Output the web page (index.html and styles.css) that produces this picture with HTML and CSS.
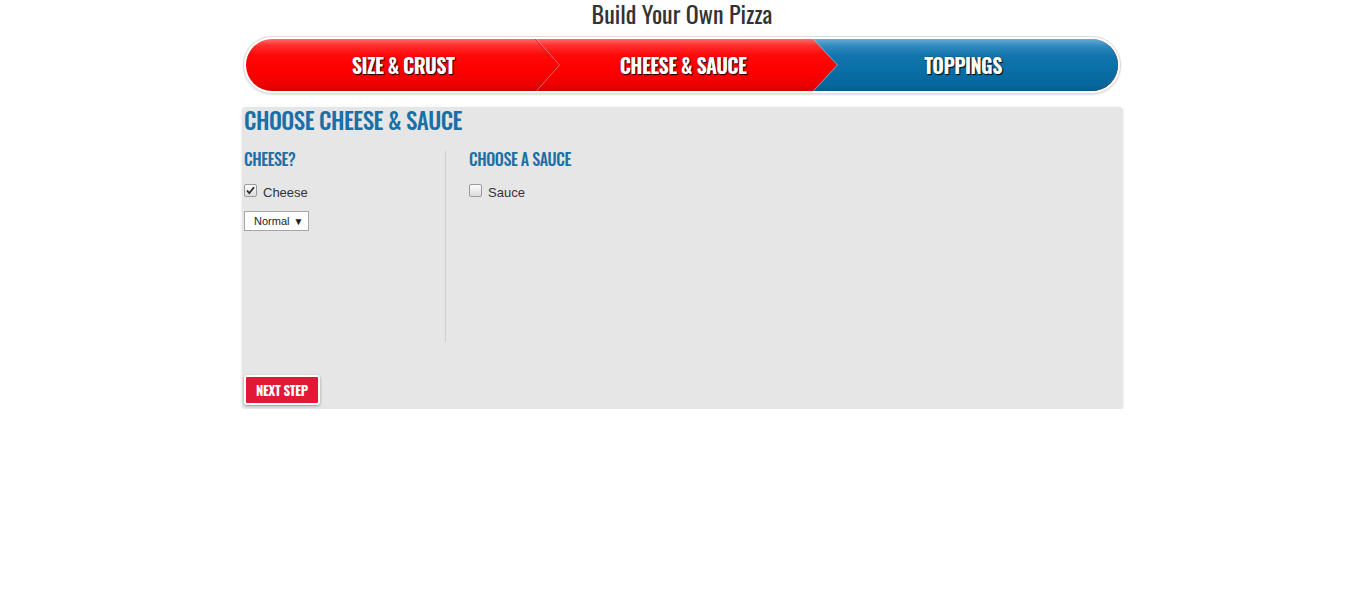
FILE: index.html
```html
<!DOCTYPE html>
<html>
<head>
<meta charset="utf-8">
<title>Build Your Own Pizza</title>
<link rel="stylesheet" href="styles.css">
</head>
<body>
<div class="page">
  <h1 class="title">Build Your Own Pizza</h1>
  <div class="steps">
    <div class="steps-inner">
      <div class="step step-1">SIZE &amp; CRUST
        <svg class="chev" width="26" height="52" viewBox="0 0 26 52"><polyline points="0,0 23,26 0,52" fill="none" stroke="rgba(150,40,40,0.55)" stroke-width="1"/><polyline points="1.5,0 24.5,26 1.5,52" fill="none" stroke="rgba(255,200,200,0.45)" stroke-width="1"/></svg>
      </div>
      <div class="step step-2">CHEESE &amp; SAUCE</div>
      <div class="step step-3">TOPPINGS
        <svg class="edge" width="26" height="52" viewBox="0 0 26 52"><polyline points="0,0 24,26 0,52" fill="none" stroke="rgba(190,190,200,0.8)" stroke-width="1.2"/></svg>
      </div>
    </div>
  </div>
  <div class="panel">
    <h2 class="panel-title">CHOOSE CHEESE &amp; SAUCE</h2>
    <div class="cols">
      <div class="col col-left">
        <h3 class="col-title">CHEESE?</h3>
        <label class="check-row"><span class="box"><svg width="11" height="11" viewBox="0 0 11 11"><path d="M2 5.5 L4.3 8.2 L9 2.2" fill="none" stroke="#2b2b2b" stroke-width="1.8"/></svg></span><span class="lbl">Cheese</span></label>
        <div class="select">Normal <span class="caret">▼</span></div>
      </div>
      <div class="col col-right">
        <h3 class="col-title">CHOOSE A SAUCE</h3>
        <label class="check-row"><span class="box"></span><span class="lbl">Sauce</span></label>
      </div>
    </div>
    <button class="next">NEXT STEP</button>
  </div>
</div>
</body>
</html>
```

FILE: styles.css
```css
* { box-sizing: border-box; }
body {
  margin: 0;
  background: #fff;
  font-family: "Liberation Sans", Arial, sans-serif;
}
.page {
  width: 882px;
  margin: 0 auto;
}
.title {
  margin: 0;
  font-family: "Oswald", "Liberation Sans Narrow", "DejaVu Sans Condensed", sans-serif;
  font-weight: normal;
  font-size: 24px;
  line-height: 26px;
  text-align: center;
  color: #333;
}
.steps {
  margin: 10px 2px 0 2px;
  border: 1px solid #dcdcdc;
  border-radius: 30px;
  padding: 2px;
  background: #fff;
  box-shadow: 0 1px 2px rgba(0,0,0,0.12);
}
.steps-inner {
  display: flex;
  height: 52px;
  border-radius: 26px;
  overflow: hidden;
  padding-left: 17px;
  background: linear-gradient(to bottom, #ff6a6a 0%, #ff3030 12%, #ff0a0a 30%, #ff0000 55%, #f00000 85%, #d80000 100%);
}
.step {
  position: relative;
  line-height: 52px;
  text-align: center;
  color: #fff;
  font-family: "Oswald", "Liberation Sans Narrow", "DejaVu Sans Condensed", sans-serif;
  font-weight: bold;
  font-size: 20px;
  letter-spacing: -0.6px;
  text-shadow: 1px 1px 1px rgba(0,0,0,0.9), 0 0 2px rgba(0,0,0,0.4);
}
.step-1 { width: 280px; }
.step-2 { width: 270px; padding-left: 10px; }
.step-3 {
  flex: 1;
  padding-right: 5px;
  background: linear-gradient(to bottom, #64acd6 0%, #2f89be 14%, #1275ad 32%, #0a6ea7 60%, #08679d 88%, #065c8d 100%);
  clip-path: polygon(0 0, 100% 0, 100% 100%, 0 100%, 24px 50%);
}
.chev {
  position: absolute;
  left: 272px;
  top: 0;
}
.edge {
  position: absolute;
  left: 0;
  top: 0;
}
.panel {
  margin-top: 13px;
  margin-left: 1px;
  background: #e6e6e6;
  border-radius: 4px;
  box-shadow: 0 1px 3px rgba(0,0,0,0.12);
  padding: 0 3px 4px 2px;
}
.panel-title {
  margin: 0;
  font-family: "Oswald", "Liberation Sans Narrow", "DejaVu Sans Condensed", sans-serif;
  font-weight: 500;
  font-size: 23px;
  line-height: 26px;
  letter-spacing: -0.5px;
  color: #1a70a6;
}
.cols {
  display: grid;
  grid-template-columns: 202px 1fr;
  margin-top: 18px;
  height: 191px;
}
.col-left {
  border-right: 1px solid #cfcfcf;
}
.col-right {
  padding-left: 23px;
}
.col-title {
  margin: 0;
  font-family: "Oswald", "Liberation Sans Narrow", "DejaVu Sans Condensed", sans-serif;
  font-weight: 500;
  font-size: 16px;
  line-height: 17px;
  letter-spacing: -0.4px;
  color: #1a70a6;
}
.check-row {
  display: flex;
  align-items: flex-start;
  gap: 6px;
  margin-top: 15px;
  font-size: 13px;
  line-height: 16px;
  color: #333;
}
.lbl {
  padding-top: 2px;
}
.box {
  width: 13px;
  height: 13px;
  border: 1px solid #9a9a9a;
  border-radius: 2px;
  background: linear-gradient(to bottom, #fcfcfc, #dcdcdc);
  display: flex;
  align-items: center;
  justify-content: center;
  margin-top: 1px;
}
.select {
  display: inline-block;
  margin-top: 10px;
  width: 65px;
  height: 20px;
  border: 1px solid #a6a6a6;
  background: #fff;
  font-size: 11px;
  line-height: 18px;
  color: #222;
  padding-left: 9px;
}
.caret {
  font-size: 10px;
  margin-left: 1px;
}
.next {
  margin-top: 33px;
  width: 76px;
  height: 30px;
  border: 2px solid #fff;
  border-radius: 3px;
  background: #e31837;
  box-shadow: 0 1px 3px rgba(0,0,0,0.35);
  color: #fff;
  font-family: "Oswald", "Liberation Sans Narrow", "DejaVu Sans Condensed", sans-serif;
  font-weight: bold;
  font-size: 13px;
  letter-spacing: -0.3px;
  padding: 0;
  cursor: pointer;
  display: block;
}
```
